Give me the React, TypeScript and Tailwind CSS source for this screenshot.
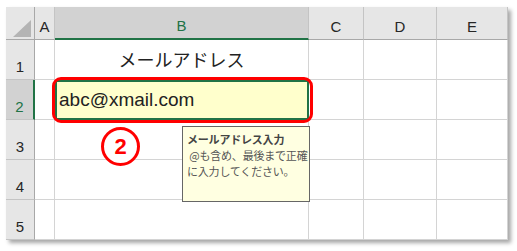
const cols = ['A', 'B', 'C', 'D', 'E']
const rows = [1, 2, 3, 4, 5]

const latin = "font-['Liberation_Sans','Noto_Sans_CJK_JP',sans-serif]"
const jp = "font-['Noto_Sans_CJK_JP',sans-serif]"

function ColHeader({ label }: { label: string }) {
  const selected = label === 'B'
  return (
    <div
      className={`flex items-end justify-center border-r border-r-[#c4c4c4] pb-[5px] text-[15px] leading-none ${latin} ${
        selected
          ? 'border-b-2 border-b-[#217346] bg-[#d2d2d2] text-[#217346]'
          : 'border-b border-b-[#a8a8a8] bg-[#e6e6e6] text-[#262626]'
      }`}
    >
      {label}
    </div>
  )
}

function RowHeader({ n }: { n: number }) {
  const selected = n === 2
  return (
    <div
      className={`flex items-end justify-center border-b border-b-[#c4c4c4] pb-[5px] text-[15px] leading-none ${latin} ${
        selected
          ? 'border-r-2 border-r-[#217346] bg-[#d2d2d2] text-[#217346]'
          : 'border-r border-r-[#a8a8a8] bg-[#e6e6e6] text-[#262626]'
      }`}
    >
      {n}
    </div>
  )
}

function Cell({ row, col }: { row: number; col: string }) {
  if (row === 1 && col === 'B') {
    return (
      <div className={`flex items-center justify-center border-r border-b border-[#d4d4d4] text-[18px] text-[#222] ${jp}`}>
        メールアドレス
      </div>
    )
  }
  if (row === 2 && col === 'B') {
    return (
      <div className={`flex items-center border-2 border-[#217346] bg-[#ffffcc] pl-[2px] text-[19px] text-[#222] ${latin}`}>
        abc@xmail.com
      </div>
    )
  }
  return <div className="border-r border-b border-[#d4d4d4] bg-white" />
}

export default function App() {
  return (
    <div className="relative h-[251px] w-[517px] overflow-hidden bg-white">
      <div className="ml-[6px] mt-[7px] grid w-[502px] grid-cols-[29px_20px_254px_55px_73px_71px] grid-rows-[33px_40px_40px_40px_40px_40px] shadow-[3px_3px_4px_rgba(0,0,0,0.35)]">
        {/* corner */}
        <div className="relative border-r border-b border-[#a8a8a8] bg-[#e6e6e6]">
          <svg className="absolute left-[7px] top-[13px]" width="18" height="17" viewBox="0 0 18 17">
            <polygon points="18,0 18,17 0,17" fill="#b4b4b4" />
          </svg>
        </div>
        {cols.map((c) => (
          <ColHeader key={c} label={c} />
        ))}
        {rows.map((r) => [
          <RowHeader key={`h${r}`} n={r} />,
          ...cols.map((c) => <Cell key={`${c}${r}`} row={r} col={c} />),
        ])}
      </div>

      {/* red highlight around B2 */}
      <div className="absolute left-[52px] top-[77px] h-[46px] w-[261px] rounded-[9px] border-[3px] border-[#ff0000]" />

      {/* step number */}
      <div className={`absolute left-[101px] top-[127px] flex h-[39px] w-[39px] items-center justify-center rounded-full border-[3px] border-[#ff0000] bg-white text-[22px] font-bold text-[#ff0000] ${latin}`}>
        2
      </div>

      {/* input message tooltip */}
      <div className={`absolute left-[182px] top-[126px] h-[76px] w-[128px] border border-[#666] bg-[#ffffe1] px-[4px] pt-[4px] text-[11px] leading-[16px] tracking-[-0.2px] text-[#555] ${jp}`}>
        <p className="font-bold text-[#444]">メールアドレス入力</p>
        <p className="whitespace-pre"> @も含め、最後まで正確</p>
        <p>に入力してください。</p>
      </div>
    </div>
  )
}
